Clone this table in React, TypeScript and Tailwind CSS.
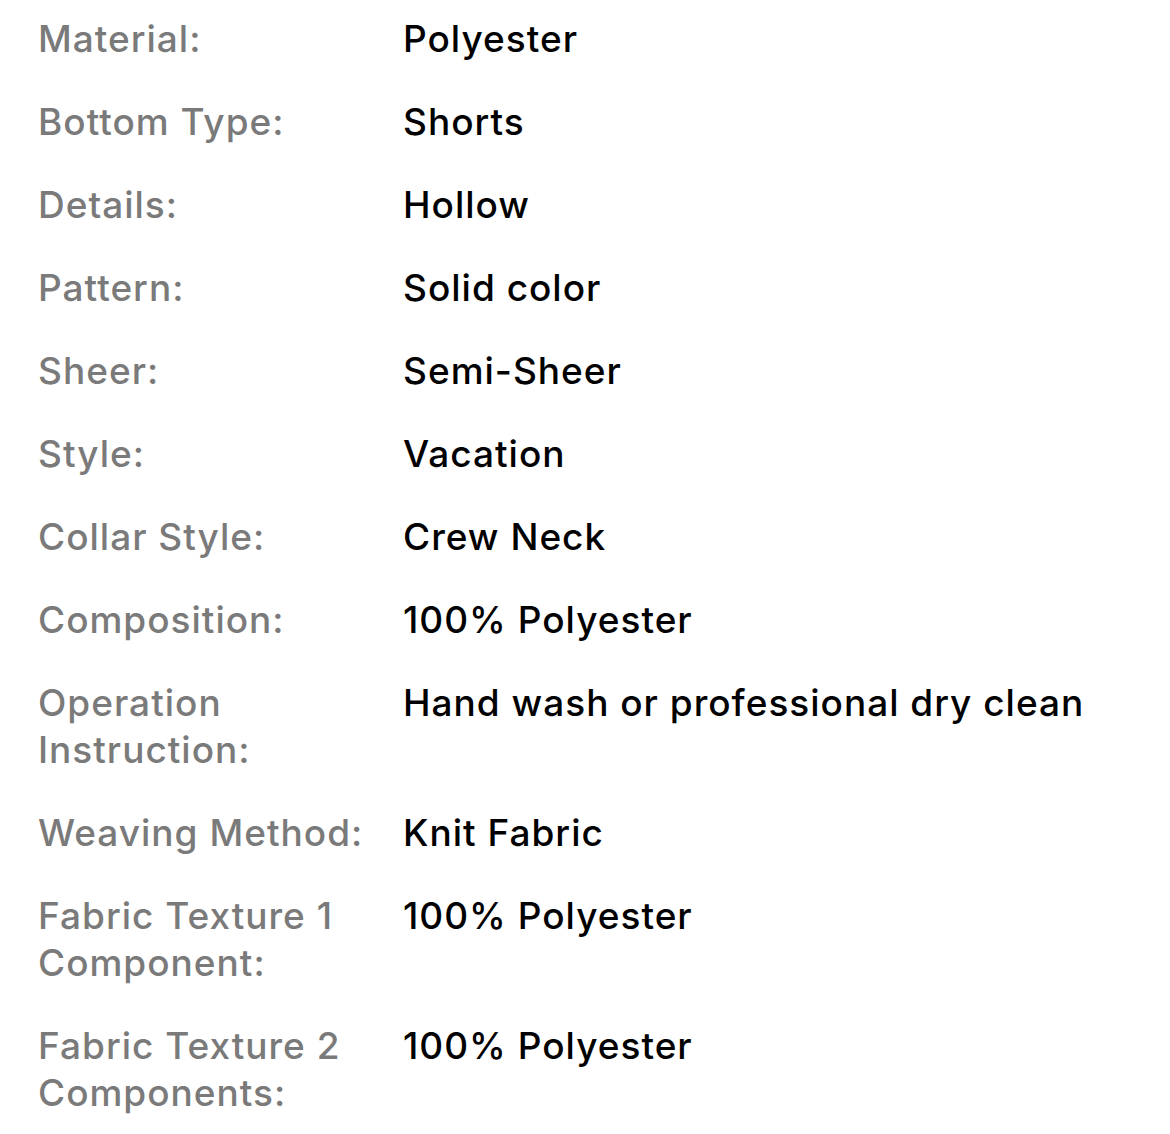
const rows: { label: string; value: string }[] = [
  { label: 'Material:', value: 'Polyester' },
  { label: 'Bottom Type:', value: 'Shorts' },
  { label: 'Details:', value: 'Hollow' },
  { label: 'Pattern:', value: 'Solid color' },
  { label: 'Sheer:', value: 'Semi-Sheer' },
  { label: 'Style:', value: 'Vacation' },
  { label: 'Collar Style:', value: 'Crew Neck' },
  { label: 'Composition:', value: '100% Polyester' },
  { label: 'Operation Instruction:', value: 'Hand wash or professional dry clean' },
  { label: 'Weaving Method:', value: 'Knit Fabric' },
  { label: 'Fabric Texture 1 Component:', value: '100% Polyester' },
  { label: 'Fabric Texture 2 Components:', value: '100% Polyester' },
];

const App = () => {
  return (
    <div className="w-[1170px] min-h-[1134px] bg-white pl-[38px] pt-[15px] font-['Inter','Liberation_Sans',sans-serif] text-[37px] font-medium leading-[47px] tracking-[1px]">
      <div className="flex flex-col gap-[36px]">
        {rows.map((row) => (
          <div key={row.label} className="flex">
            <div className="w-[365px] shrink-0 pr-[20px] text-[#7a7a7a]">{row.label}</div>
            <div className="text-black">{row.value}</div>
          </div>
        ))}
      </div>
    </div>
  );
};

export default App;
